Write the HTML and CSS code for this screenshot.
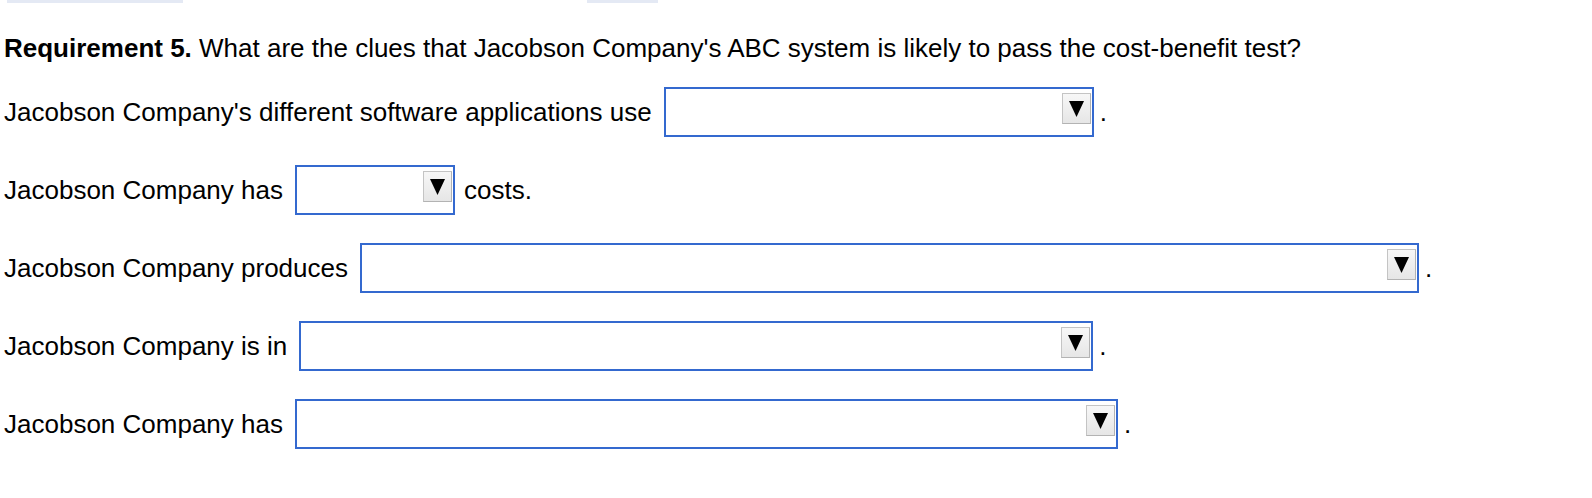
FILE: index.html
```html
<!DOCTYPE html>
<html lang="en">

<head>
  <meta charset="UTF-8">
  <meta name="viewport" content="width=device-width, initial-scale=1.0">
  <title>Requirement 5</title>
  <link rel="stylesheet" href="styles.css">
</head>

<body>
  <div class="tabs">
    <span class="tab tab-wide"></span>
    <span class="tab tab-narrow"></span>
  </div>

  <p class="question"><b>Requirement 5.</b> What are the clues that Jacobson Company's ABC system is likely to pass the cost-benefit test?</p>

  <div class="answers">
    <div class="row">
      <span>Jacobson Company's different software applications use</span>
      <span class="select w-uses"><span class="arrow"><svg width="15" height="16" viewBox="0 0 15 16"><polygon points="0,0 15,0 7.5,16" /></svg></span></span>
      <span>.</span>
    </div>

    <div class="row">
      <span>Jacobson Company has</span>
      <span class="select w-costs"><span class="arrow"><svg width="15" height="16" viewBox="0 0 15 16"><polygon points="0,0 15,0 7.5,16" /></svg></span></span>
      <span class="after">costs.</span>
    </div>

    <div class="row">
      <span>Jacobson Company produces</span>
      <span class="select w-produces"><span class="arrow"><svg width="15" height="16" viewBox="0 0 15 16"><polygon points="0,0 15,0 7.5,16" /></svg></span></span>
      <span>.</span>
    </div>

    <div class="row">
      <span>Jacobson Company is in</span>
      <span class="select w-market"><span class="arrow"><svg width="15" height="16" viewBox="0 0 15 16"><polygon points="0,0 15,0 7.5,16" /></svg></span></span>
      <span>.</span>
    </div>

    <div class="row">
      <span>Jacobson Company has</span>
      <span class="select w-has"><span class="arrow"><svg width="15" height="16" viewBox="0 0 15 16"><polygon points="0,0 15,0 7.5,16" /></svg></span></span>
      <span>.</span>
    </div>
  </div>
</body>

</html>
```

FILE: styles.css
```css
* {
  margin: 0;
  box-sizing: border-box;
}

body {
  width: 100vw;
  height: 100vh;
  overflow: hidden;
  padding-left: 4px;
  background: #fff;
  color: #000;
  font-family: "Liberation Sans", Arial, sans-serif;
  font-size: 26px;
}

/* Tab strip cut off at the top edge */
.tabs {
  display: flex;
  height: 3px;
}

.tab {
  display: block;
  height: 3px;
  background: #e4e9f4;
}

.tab-wide {
  width: 176px;
  margin-left: 3px;
}

.tab-narrow {
  width: 71px;
  margin-left: 404px;
}

.question {
  margin-top: 30px;
  line-height: 30px;
}

.answers {
  display: flex;
  flex-direction: column;
  gap: 28px;
  margin-top: 24px;
}

.row {
  display: flex;
  align-items: center;
  height: 50px;
  white-space: nowrap;
}

/* Words that follow a dropdown sit a little further out than the full stop */
.after {
  margin-left: 3px;
}

/* Dropdown: blue frame with the grey arrow button at its right */
.select {
  display: flex;
  justify-content: flex-end;
  align-items: flex-start;
  height: 50px;
  margin: 0 6px 0 12px;
  padding: 4px 1px;
  border: 2px solid #3469cf;
  background: #fff;
}

.w-uses {
  width: 430px;
}

.w-costs {
  width: 160px;
}

.w-produces {
  width: 1059px;
}

.w-market {
  width: 794px;
}

.w-has {
  width: 823px;
}

.arrow {
  display: flex;
  justify-content: center;
  align-items: center;
  width: 29px;
  height: 31px;
  border: 1px solid #c4c4c4;
  border-right-color: #b3b3b3;
  border-bottom-color: #b3b3b3;
  background: linear-gradient(to bottom, #f7f7f7, #e6e6e6);
}

.arrow svg {
  display: block;
  fill: #000;
}
```
